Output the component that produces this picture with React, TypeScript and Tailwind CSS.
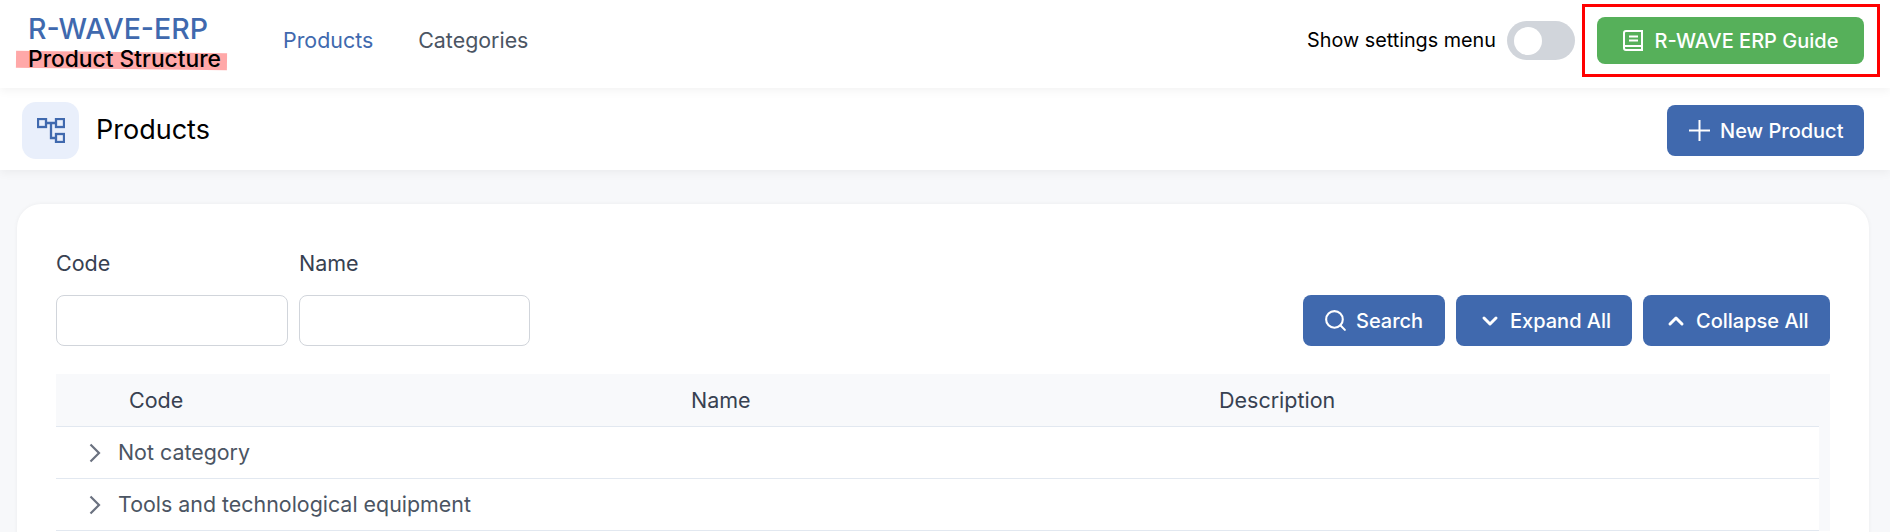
import { ChevronDown, ChevronUp, Search } from "lucide-react";

const font = { fontFamily: "Inter, sans-serif" };

const Button = ({ children, className }: any) => (
  <button className={`flex h-[51px] items-center rounded-lg bg-[#4069ae] text-[20px] font-medium text-white ${className}`}>
    {children}
  </button>
);

const Row = ({ label }: { label: string }) => (
  <div className="flex h-[52px] items-center border-b border-[#e2e8f0] pl-[33px] text-[21.400px] text-[#4b5563]">
    <svg className="mr-[17px]" width="12" height="20" viewBox="0 0 12 20" fill="none" stroke="#6b7280" strokeWidth="2.200">
      <path d="M1.500 1.500 10 10l-8.500 8.500" />
    </svg>
    {label}
  </div>
);

const Filter = ({ label, className }: { label: string; className: string }) => (
  <label className={`text-[21.500px] text-[#374151] ${className}`}>
    <div className="mb-[20px] leading-[24px]">{label}</div>
    <input className="block h-[51px] w-full rounded-lg border border-[#d1d5db] bg-white" />
  </label>
);

export default function App() {
  return (
    <div className="h-[532px] overflow-hidden bg-[#f7f8fa]" style={font}>
      <header className="relative z-10 flex h-[88px] items-center justify-between bg-white pr-[10px] pb-[7px] shadow-[0_2px_10px_rgba(0,0,0,0.06)]">
        <div className="flex items-center">
          <div className="relative ml-[16px] mt-[7px] w-[211px]">
            <div className="pl-[12px] text-[28.500px] leading-[34px] font-medium text-[#4069ae] -mt-[7px] mb-[4px]">R-WAVE-ERP</div>
            <div className="absolute left-0 top-[33px] h-[17px] w-full rotate-[0.7deg] bg-[#ffa8a8]" />
            <div className="relative pl-[12px] text-[22.800px] leading-[22px] font-medium text-black -mt-[2px]">Product Structure</div>
          </div>
          <nav className="ml-[56px] flex gap-[45px] text-[21.400px]">
            <span className="text-[#4069ae]">Products</span>
            <span className="text-[#4b5563]">Categories</span>
          </nav>
        </div>
        <div className="flex items-center">
          <span className="text-[19.800px] text-black">Show settings menu</span>
          <div className="ml-[11px] flex h-[39px] w-[68px] items-center rounded-full bg-[#d1d5db] pl-[7px]">
            <div className="h-[28px] w-[28px] rounded-full bg-white" />
          </div>
          <div className="ml-[7px] border-[3px] border-[#ff0000] pl-[12px] pr-[13px] py-[10px]">
            <button className="flex h-[47px] w-[267px] items-center justify-center rounded-lg bg-[#56b05a] text-[20px] font-medium text-white">
              <svg className="mr-[12px]" width="20" height="21" viewBox="0 0 20 21" fill="none" stroke="currentColor" strokeWidth="2">
                <path d="M3 1h16v19H3a2 2 0 0 1-2-2V3a2 2 0 0 1 2-2z" />
                <path d="M1 16h18M6 6.500h9M6 10.500h9" />
              </svg>
              R-WAVE ERP Guide
            </button>
          </div>
        </div>
      </header>
      <section className="relative flex h-[82px] items-center justify-between bg-white pl-[22px] pr-[26px] pt-[3px] shadow-[0_2px_10px_rgba(0,0,0,0.06)]">
        <div className="flex items-center">
          <div className="flex h-[57px] w-[57px] items-center justify-center rounded-[14px] bg-[#e9effb] text-[#4069ae]">
            <svg width="28" height="25" viewBox="0 0 28 25" fill="none" stroke="currentColor" strokeWidth="2.300">
              <rect x="1" y="1" width="8" height="8" />
              <rect x="19" y="1" width="8" height="8" />
              <rect x="19" y="16" width="8" height="8" />
              <path d="M9 5h10M14 5v15h5" />
            </svg>
          </div>
          <h1 className="ml-[17px] text-[27px] text-black">Products</h1>
        </div>
        <Button className="w-[197px] pl-[22px] text-[19.300px]">
          <svg className="mr-[10px]" width="21" height="21" viewBox="0 0 21 21" fill="none" stroke="currentColor" strokeWidth="2">
            <path d="M10.500 0v21M0 10.500h21" />
          </svg>
          New Product
        </Button>
      </section>
      <main className="pl-[17px] pr-[21px] pt-[34px]">
        <div className="h-[400px] rounded-t-[24px] bg-white px-[39px] pt-[47px] shadow-[0_0_4px_rgba(0,0,0,0.05)]">
          <div className="flex items-end justify-between">
            <div className="flex gap-[11px]">
              <Filter label="Code" className="w-[232px]" />
              <Filter label="Name" className="w-[231px]" />
            </div>
            <div className="flex gap-[11px]">
              <Button className="w-[142px] pl-[20px]">
                <Search className="mr-[8px] h-[25px] w-[25px]" strokeWidth={2} />
                Search
              </Button>
              <Button className="w-[176px] pl-[22px]">
                <ChevronDown className="mr-[8px] h-[24px] w-[24px]" strokeWidth={3} />
                Expand All
              </Button>
              <Button className="w-[187px] pl-[21px]">
                <ChevronUp className="mr-[8px] h-[24px] w-[24px]" strokeWidth={3} />
                Collapse All
              </Button>
            </div>
          </div>
          <div className="mt-[28px] bg-[#f8f9fb] pr-[11px]">
            <div className="grid h-[53px] grid-cols-[562px_528px_1fr] items-center border-b border-[#e2e8f0] pl-[73px] text-[21.500px] text-[#374151]">
              <span>Code</span>
              <span>Name</span>
              <span>Description</span>
            </div>
            <div className="bg-white">
              <Row label="Not category" />
              <Row label="Tools and technological equipment" />
            </div>
          </div>
        </div>
      </main>
    </div>
  );
}
